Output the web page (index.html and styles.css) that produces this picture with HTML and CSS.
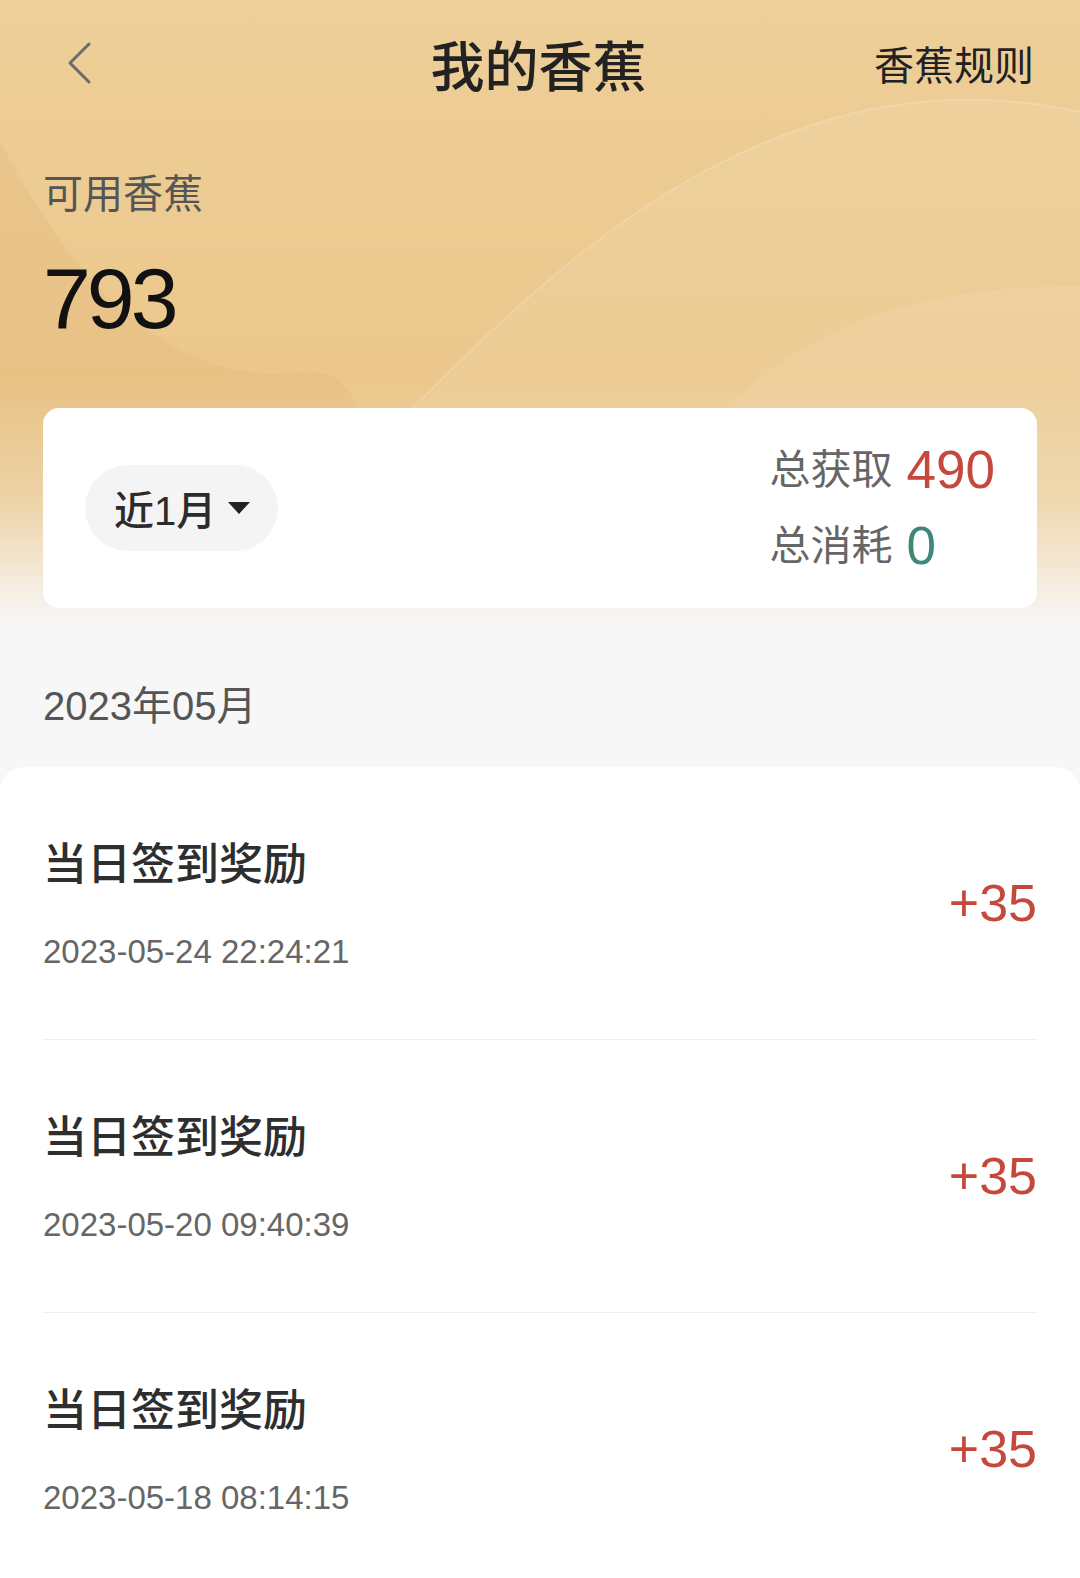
FILE: index.html
```html
<!DOCTYPE html>
<html lang="zh-CN">
<head>
    <meta charset="UTF-8">
    <meta name="viewport" content="width=device-width, initial-scale=1.0">
    <title>我的香蕉</title>
    <link rel="stylesheet" href="styles.css">
</head>
<body>
    <div class="top">
        <svg class="waves" viewBox="0 0 1080 640" preserveAspectRatio="none" aria-hidden="true">
            <path d="M0,140 C80,300 180,385 300,372 C360,366 380,420 390,640 L0,640 Z" fill="rgba(196,134,52,0.07)"/>
            <path d="M380,440 C520,300 640,180 820,122 C920,92 1010,96 1080,112 L1080,640 L380,640 Z" fill="rgba(255,255,255,0.08)"/>
            <path d="M380,440 C520,300 640,180 820,122 C920,92 1010,96 1080,112" fill="none" stroke="rgba(255,255,255,0.16)" stroke-width="2"/>
            <path d="M690,440 C790,335 900,285 1080,286 L1080,640 L690,640 Z" fill="rgba(255,255,255,0.08)"/>
        </svg>

        <div class="nav">
            <div class="nav-left">
                <svg class="back" width="26" height="44" viewBox="0 0 26 44">
                    <polyline points="22,3 3,22 22,41" fill="none" stroke="#6b6b6b" stroke-width="3" stroke-linecap="round" stroke-linejoin="round"/>
                </svg>
            </div>
            <div class="nav-title">我的香蕉</div>
            <div class="nav-right">香蕉规则</div>
        </div>

        <div class="balance">
            <div class="balance-label">可用香蕉</div>
            <div class="balance-num">793</div>
        </div>

        <div class="summary">
            <div class="period">
                <span>近1月</span>
                <i class="caret"></i>
            </div>
            <div class="stats">
                <span class="stat-label">总获取</span>
                <span class="stat-value gain">490</span>
                <span class="stat-label">总消耗</span>
                <span class="stat-value spend">0</span>
            </div>
        </div>

        <div class="month">2023年05月</div>
    </div>

    <div class="records">
        <div class="record">
            <div class="record-info">
                <div class="record-title">当日签到奖励</div>
                <div class="record-time">2023-05-24 22:24:21</div>
            </div>
            <div class="record-amount">+35</div>
        </div>
        <div class="record">
            <div class="record-info">
                <div class="record-title">当日签到奖励</div>
                <div class="record-time">2023-05-20 09:40:39</div>
            </div>
            <div class="record-amount">+35</div>
        </div>
        <div class="record">
            <div class="record-info">
                <div class="record-title">当日签到奖励</div>
                <div class="record-time">2023-05-18 08:14:15</div>
            </div>
            <div class="record-amount">+35</div>
        </div>
    </div>
</body>
</html>
```

FILE: styles.css
```css
body {
    margin: 0;
    background-color: #f7f7f7;
    font-family: "Liberation Sans", "Noto Sans CJK SC", sans-serif;
    color: #333;
}

.top {
    position: relative;
    padding: 0 43px;
    background: linear-gradient(180deg, #eecf99 0, #ebc78b 380px, #efd6ab 500px, #f7f7f7 625px);
}

.waves {
    position: absolute;
    left: 0;
    top: 0;
    width: 100%;
    height: 640px;
    z-index: 0;
    -webkit-mask-image: linear-gradient(180deg, #000 0, #000 380px, transparent 580px);
    mask-image: linear-gradient(180deg, #000 0, #000 380px, transparent 580px);
}

.nav, .balance, .summary, .month {
    position: relative;
    z-index: 1;
}

.nav {
    height: 126px;
    display: grid;
    grid-template-columns: 1fr auto 1fr;
    align-items: center;
    padding-right: 3px;
}

.back {
    display: block;
    margin-left: 24px;
}

.nav-title {
    font-size: 54px;
    font-weight: 500;
    color: #222;
}

.nav-right {
    justify-self: end;
    font-size: 40px;
    color: #222;
}

.balance-label {
    margin-top: 40px;
    font-size: 40px;
    line-height: 56px;
    color: #555;
}

.balance-num {
    margin-top: 26px;
    font-size: 86px;
    line-height: 100px;
    letter-spacing: -4px;
    color: #111;
}

.summary {
    margin-top: 60px;
    height: 200px;
    background-color: #fff;
    border-radius: 16px;
    padding: 0 42px;
    display: flex;
    justify-content: space-between;
    align-items: center;
}

.period {
    display: inline-flex;
    align-items: center;
    height: 86px;
    padding: 0 28px 0 29px;
    border-radius: 43px;
    background-color: #f4f4f4;
    font-size: 40px;
    font-weight: 500;
    color: #2b2b2b;
}

.caret {
    width: 0;
    height: 0;
    margin-left: 12px;
    border-left: 11px solid transparent;
    border-right: 11px solid transparent;
    border-top: 12px solid #222;
}

.stats {
    display: grid;
    grid-template-columns: auto auto;
    column-gap: 14px;
    align-items: center;
}

.stat-label {
    font-size: 41px;
    line-height: 76px;
    color: #666;
}

.stat-value {
    font-size: 53px;
    line-height: 76px;
}

.gain {
    color: #c4483c;
}

.spend {
    color: #3f8779;
}

.month {
    margin-top: 70px;
    padding-bottom: 33px;
    font-size: 40px;
    line-height: 56px;
    color: #555;
}

.records {
    background-color: #fff;
    border-radius: 24px 24px 0 0;
    padding: 0 43px;
}

.record {
    height: 272px;
    border-bottom: 1px solid #efefef;
    display: flex;
    justify-content: space-between;
    align-items: center;
}

.record-title {
    font-size: 44px;
    line-height: 60px;
    font-weight: 500;
    color: #2e2e2e;
}

.record-time {
    margin-top: 37px;
    font-size: 33px;
    line-height: 40px;
    color: #666;
}

.record-amount {
    font-size: 52px;
    color: #c4483c;
}
```
